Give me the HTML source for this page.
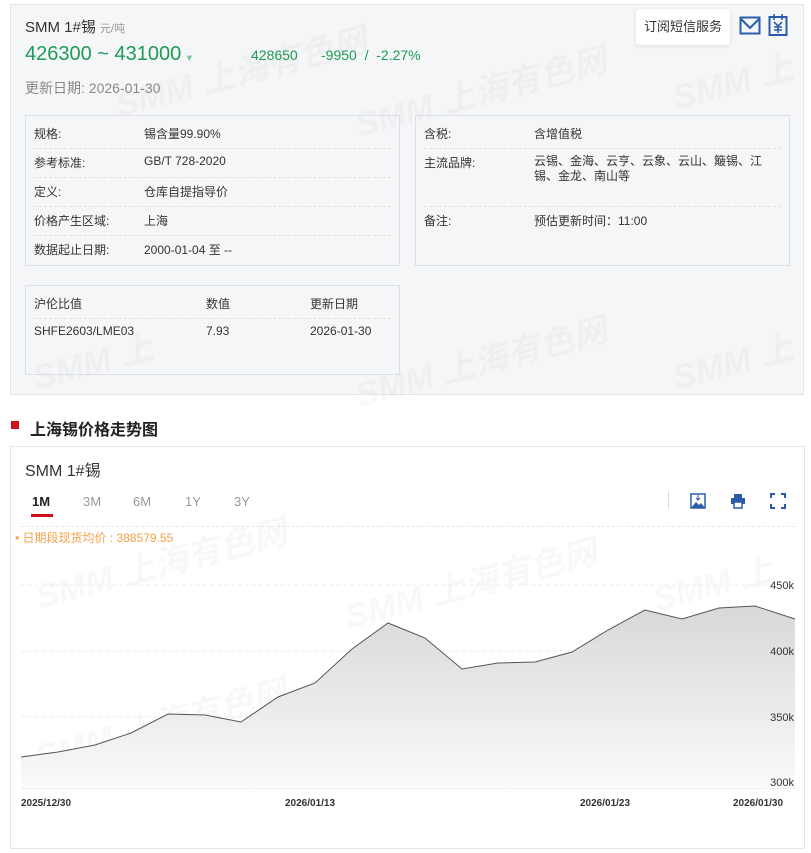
<!DOCTYPE html>
<html><head><meta charset="utf-8"><style>
body{margin:0;width:811px;height:853px;background:#fff;font-family:"Liberation Sans","Noto Sans CJK SC",sans-serif;position:relative;overflow:hidden;font-size:12px;color:#333}
.abs{position:absolute}
.top{left:10px;top:4px;width:794px;height:391px;background:#f5f6f8;border:1px solid #e4e6ea;box-sizing:border-box}
.box{position:absolute;border:1px solid #dcdfe4;box-sizing:border-box}
.row{position:absolute;left:8px;right:8px;height:29px;border-bottom:1px dashed #e0e0e0}
.row span{position:absolute;top:6px;font-size:12px;color:#333}
.wm{position:absolute;color:rgba(0,0,0,0.028);font-size:34px;font-weight:bold;font-style:italic;transform:rotate(-15deg);white-space:nowrap;z-index:0}
</style></head><body>
<div class="abs top">
 <div class="wm" style="left:100px;top:40px">SMM 上海有色网</div>
 <div class="wm" style="left:340px;top:60px">SMM 上海有色网</div>
 <div class="wm" style="left:660px;top:50px">SMM 上</div>
 <div class="wm" style="left:20px;top:330px">SMM 上</div>
 <div class="wm" style="left:340px;top:330px">SMM 上海有色网</div>
 <div class="wm" style="left:660px;top:330px">SMM 上</div>
 <div class="abs" style="left:14px;top:11px;font-size:15px;color:#333">SMM 1#锡 <span style="font-size:11px;color:#999">元/吨</span></div>
 <div class="abs" style="left:14px;top:38px;font-size:20px;color:#1e9b55">426300 ~ 431000 <span style="font-size:9px">⩔</span></div>
 <div class="abs" style="left:240px;top:42px;font-size:14px;color:#1e9b55">428650</div>
 <div class="abs" style="left:310px;top:42px;font-size:14px;color:#1e9b55">-9950 &nbsp;/ &nbsp;-2.27%</div>
 <div class="abs" style="left:14px;top:73px;font-size:14px;color:#888">更新日期: 2026-01-30</div>
 <div class="abs" style="left:625px;top:4px;width:94px;height:36px;background:#fff;border-radius:3px;box-shadow:0 1px 4px rgba(0,0,0,.1);font-size:13px;line-height:36px;text-align:center;color:#333">订阅短信服务</div>
 <svg class="abs" style="left:728px;top:11px" width="22" height="20"><rect x="1.5" y="1.5" width="19" height="16" fill="none" stroke="#2a5caa" stroke-width="2"/><path d="M2 3 L11 12 L20 3" fill="none" stroke="#2a5caa" stroke-width="2"/></svg>
 <svg class="abs" style="left:757px;top:8px" width="20" height="24"><rect x="1.5" y="4" width="17" height="18" fill="none" stroke="#2a5caa" stroke-width="2"/><path d="M6 1v6M14 1v6M6 9l4 4 4-4M10 13v7M6 14h8M6 17h8" fill="none" stroke="#2a5caa" stroke-width="1.6"/></svg>
 <div class="box" style="left:14px;top:110px;width:375px;height:151px">
  <div class="row" style="top:3px"><span style="left:0">规格:</span><span style="left:110px">锡含量99.90%</span></div>
  <div class="row" style="top:32px"><span style="left:0">参考标准:</span><span style="left:110px">GB/T 728-2020</span></div>
  <div class="row" style="top:61px"><span style="left:0">定义:</span><span style="left:110px">仓库自提指导价</span></div>
  <div class="row" style="top:90px"><span style="left:0">价格产生区域:</span><span style="left:110px">上海</span></div>
  <div class="row" style="top:119px;border:none"><span style="left:0">数据起止日期:</span><span style="left:110px">2000-01-04 至 --</span></div>
 </div>
 <div class="box" style="left:404px;top:110px;width:375px;height:151px">
  <div class="row" style="top:3px"><span style="left:0">含税:</span><span style="left:110px">含增值税</span></div>
  <div class="row" style="top:32px;height:58px"><span style="left:0">主流品牌:</span><span style="left:110px;width:235px;line-height:15px">云锡、金海、云亨、云象、云山、簸锡、江锡、金龙、南山等</span></div>
  <div class="row" style="top:90px;border:none"><span style="left:0">备注:</span><span style="left:110px">预估更新时间：11:00</span></div>
 </div>
 <div class="box" style="left:14px;top:280px;width:375px;height:90px">
  <div class="row" style="top:3px"><span style="left:0">沪伦比值</span><span style="left:172px">数值</span><span style="left:276px">更新日期</span></div>
  <div class="row" style="top:32px;border:none"><span style="left:0">SHFE2603/LME03</span><span style="left:172px">7.93</span><span style="left:276px">2026-01-30</span></div>
 </div>
</div>
<div class="abs" style="left:11px;top:421px;width:8px;height:8px;background:#d0111b"></div>
<div class="abs" style="left:30px;top:416px;font-size:16px;font-weight:bold;color:#222">上海锡价格走势图</div>
<div class="abs" style="left:10px;top:446px;width:795px;height:403px;border:1px solid #e4e6ea;box-sizing:border-box;overflow:hidden">
 <div class="wm" style="left:20px;top:90px">SMM 上海有色网</div>
 <div class="wm" style="left:330px;top:110px">SMM 上海有色网</div>
 <div class="wm" style="left:640px;top:110px">SMM 上</div>
 <div class="wm" style="left:20px;top:250px">SMM 上海有色网</div>
 <div class="abs" style="left:14px;top:10px;font-size:16px;color:#333">SMM 1#锡</div>
 <div class="abs" style="left:21px;top:47px;font-size:13px;font-weight:bold;color:#222">1M</div>
 <div class="abs" style="left:20px;top:67px;width:22px;height:3px;background:#d0111b"></div>
 <div class="abs" style="left:72px;top:47px;font-size:13px;color:#999">3M</div>
 <div class="abs" style="left:122px;top:47px;font-size:13px;color:#999">6M</div>
 <div class="abs" style="left:174px;top:47px;font-size:13px;color:#999">1Y</div>
 <div class="abs" style="left:223px;top:47px;font-size:13px;color:#999">3Y</div>
 <div class="abs" style="left:657px;top:44px;width:1px;height:18px;background:#ddd"></div>
 <svg class="abs" style="left:679px;top:46px" width="16" height="16"><rect x="1" y="1" width="14" height="14" fill="none" stroke="#2a5caa" stroke-width="1.5"/><path d="M1 15 L6 9 L9 12 L11 10 L15 15Z" fill="#2a5caa"/><path d="M8 2v5M6 5l2 2 2-2" stroke="#2a5caa" fill="none"/></svg>
 <svg class="abs" style="left:719px;top:46px" width="16" height="16"><rect x="4" y="1" width="8" height="4" fill="#2a5caa"/><rect x="1" y="5" width="14" height="6" fill="#2a5caa"/><rect x="4" y="9" width="8" height="6" fill="#fff" stroke="#2a5caa" stroke-width="1.5"/></svg>
 <svg class="abs" style="left:759px;top:46px" width="16" height="16"><path d="M1 5V1h4M11 1h4v4M15 11v4h-4M5 15H1v-4" fill="none" stroke="#2a5caa" stroke-width="2"/></svg>
 <div class="abs" style="left:10px;top:79px;width:774px;border-top:1px dashed #e6e6e6"></div>
 <div class="abs" style="left:4px;top:82px;font-size:12px;color:#f5a04a">• 日期段现货均价 : 388579.55</div>
</div>
<svg class="abs" style="left:0;top:0" width="811" height="853">
 <defs><linearGradient id="g" x1="0" y1="0" x2="0" y2="1"><stop offset="0" stop-color="#d8d8d8"/><stop offset="1" stop-color="#fafafa"/></linearGradient></defs>
 <g stroke="#eee" stroke-dasharray="4 3"><line x1="21" x2="795" y1="585" y2="585"/><line x1="21" x2="795" y1="651" y2="651"/><line x1="21" x2="795" y1="717" y2="717"/></g>
 <line x1="21" x2="795" y1="788" y2="788" stroke="#ddd"/>
 <path d="M21 757 L58 752 L95 745 L131 733 L168 714 L205 715 L241 722 L278 697 L315 683 L352 649 L388 623 L425 638 L462 669 L498 663 L535 662 L572 652 L608 630 L645 610 L682 619 L719 608 L755 606 L795 619 L795 788 L21 788Z" fill="url(#g)"/>
 <path d="M21 757 L58 752 L95 745 L131 733 L168 714 L205 715 L241 722 L278 697 L315 683 L352 649 L388 623 L425 638 L462 669 L498 663 L535 662 L572 652 L608 630 L645 610 L682 619 L719 608 L755 606 L795 619" fill="none" stroke="#555" stroke-width="1"/>
 <g font-size="11" fill="#333" text-anchor="end" font-family="Liberation Sans"><text x="794" y="589">450k</text><text x="794" y="655">400k</text><text x="794" y="721">350k</text><text x="794" y="786">300k</text></g>
 <g font-size="10" fill="#333" font-family="Liberation Sans" font-weight="bold"><text x="21" y="806">2025/12/30</text><text x="285" y="806">2026/01/13</text><text x="580" y="806">2026/01/23</text><text x="733" y="806">2026/01/30</text></g>
</svg>
</body></html>
